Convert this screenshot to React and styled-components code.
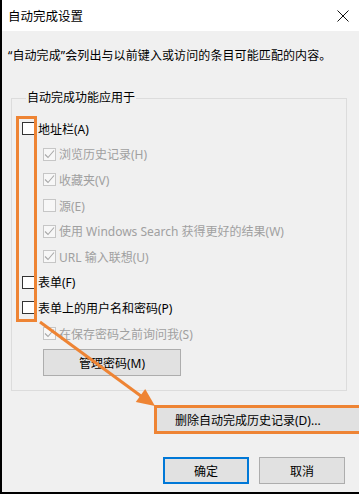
import React from 'react';
import styled, { createGlobalStyle } from "styled-components";

const GlobalStyle = createGlobalStyle`
html, body {
  margin: 0;
  padding: 0;
  background: #f0f0f0;
}
* { box-sizing: border-box; }
`;

const Window = styled.div`
position: relative;
width: 359px;
height: 494px;
overflow: hidden;
background-color: #f0f0f0;
border-left: 2px solid #000;
border-bottom: 2px solid #000;
font-family: "Noto Sans", "Noto Sans CJK SC", sans-serif;
font-size: 12px;
color: #000;
`;

const TitleBar = styled.div`
display: flex;
align-items: center;
justify-content: space-between;
height: 31px;
padding: 0 10px 0 6px;
background-color: #fff;
font-size: 12.5px;
`;

const Body = styled.div`
display: flex;
flex-direction: column;
padding: 16px 0 0 6px;
`;

const Description = styled.div`
line-height: 17px;
letter-spacing: 0.1px;
`;

const Group = styled.fieldset`
margin: 26px 0 0 3px;
width: 336px;
padding: 10px 0 14px 8px;
border: 1px solid #dcdcdc;
`;

const Legend = styled.legend`
padding: 0 1px;
margin-left: 6px;
line-height: 16px;
`;

const Row = styled.label`
display: flex;
align-items: center;
height: 25.6px;
padding-left: ${p => (p.$nested ? 23 : 2)}px;
color: ${p => (p.$disabled ? "#a0a0a0" : "#000")};
white-space: nowrap;
`;

const Box = styled.span`
display: flex;
align-items: center;
justify-content: center;
width: 13px;
height: 13px;
margin-right: 3px;
border: 1px solid ${p => (p.$disabled ? "#c6c6c6" : "#333")};
background-color: ${p => (p.$disabled ? "#f7f7f7" : "#fff")};
`;

const Button = styled.div`
display: flex;
align-items: center;
justify-content: center;
flex-shrink: 0;
height: 27px;
width: ${p => p.$width}px;
background-color: #e1e1e1;
border: ${p => (p.$primary ? "2px solid #0078d7" : "1px solid #adadad")};
white-space: nowrap;
`;

const ManageWrap = styled.div`
display: flex;
padding: 3px 0 0 23px;
`;

const DeleteRow = styled.div`
display: flex;
padding: 15px 0 0 146px;
`;

const DeleteButton = styled(Button)`
justify-content: flex-start;
padding-left: 20px;
`;

const Footer = styled.div`
display: flex;
gap: 10px;
padding: 24px 0 0 155px;
`;

const Overlay = styled.svg`
position: absolute;
left: -2px;
top: 0;
pointer-events: none;
`;

const Check = ({ checked, disabled }) => (
  <Box $disabled={disabled}>
    {checked && (
      <svg width="11" height="11" viewBox="0 0 11 11">
        <path d="M1 5.5 L4 8.5 L10 1.5" fill="none" stroke="#a8a8a8" strokeWidth="1.1" />
      </svg>
    )}
  </Box>
);

const items = [
  { text: "地址栏(A)" },
  { text: "浏览历史记录(H)", nested: true, disabled: true, checked: true },
  { text: "收藏夹(V)", nested: true, disabled: true, checked: true },
  { text: "源(E)", nested: true, disabled: true },
  { text: "使用 Windows Search 获得更好的结果(W)", nested: true, disabled: true, checked: true },
  { text: "URL 输入联想(U)", nested: true, disabled: true, checked: true },
  { text: "表单(F)" },
  { text: "表单上的用户名和密码(P)" },
  { text: "在保存密码之前询问我(S)", nested: true, disabled: true, checked: true },
];

export default function App() {
  const orange = "#ee8434";
  return (
    <>
      <GlobalStyle />
      <Window>
        <TitleBar>
          <span>自动完成设置</span>
          <svg width="12" height="12" viewBox="0 0 12 12">
            <path d="M0.5 0.5 L11.5 11.5 M11.5 0.5 L0.5 11.5" stroke="#111" strokeWidth="1" />
          </svg>
        </TitleBar>
        <Body>
          <Description>“自动完成”会列出与以前键入或访问的条目可能匹配的内容。</Description>
          <Group>
            <Legend>自动完成功能应用于</Legend>
            {items.map((it, i) => (
              <Row key={i} $nested={it.nested} $disabled={it.disabled}>
                <Check checked={it.checked} disabled={it.disabled} />
                {it.text}
              </Row>
            ))}
            <ManageWrap>
              <Button $width={138}>管理密码(M)</Button>
            </ManageWrap>
          </Group>
          <DeleteRow>
            <DeleteButton $width={240}>删除自动完成历史记录(D)...</DeleteButton>
          </DeleteRow>
          <Footer>
            <Button $width={86} $primary>确定</Button>
            <Button $width={86}>取消</Button>
          </Footer>
        </Body>
        <Overlay width="361" height="494" viewBox="0 0 361 494">
          <rect x="17.5" y="117.5" width="18" height="203" fill="none" stroke={orange} strokeWidth="3" />
          <rect x="155.5" y="406.5" width="220" height="26" fill="none" stroke={orange} strokeWidth="3" />
          <line x1="40" y1="322" x2="145" y2="399" stroke={orange} strokeWidth="3" />
          <polygon points="155,406 135.8,401.9 145.2,388.9" fill={orange} />
        </Overlay>
      </Window>
    </>
  );
}
